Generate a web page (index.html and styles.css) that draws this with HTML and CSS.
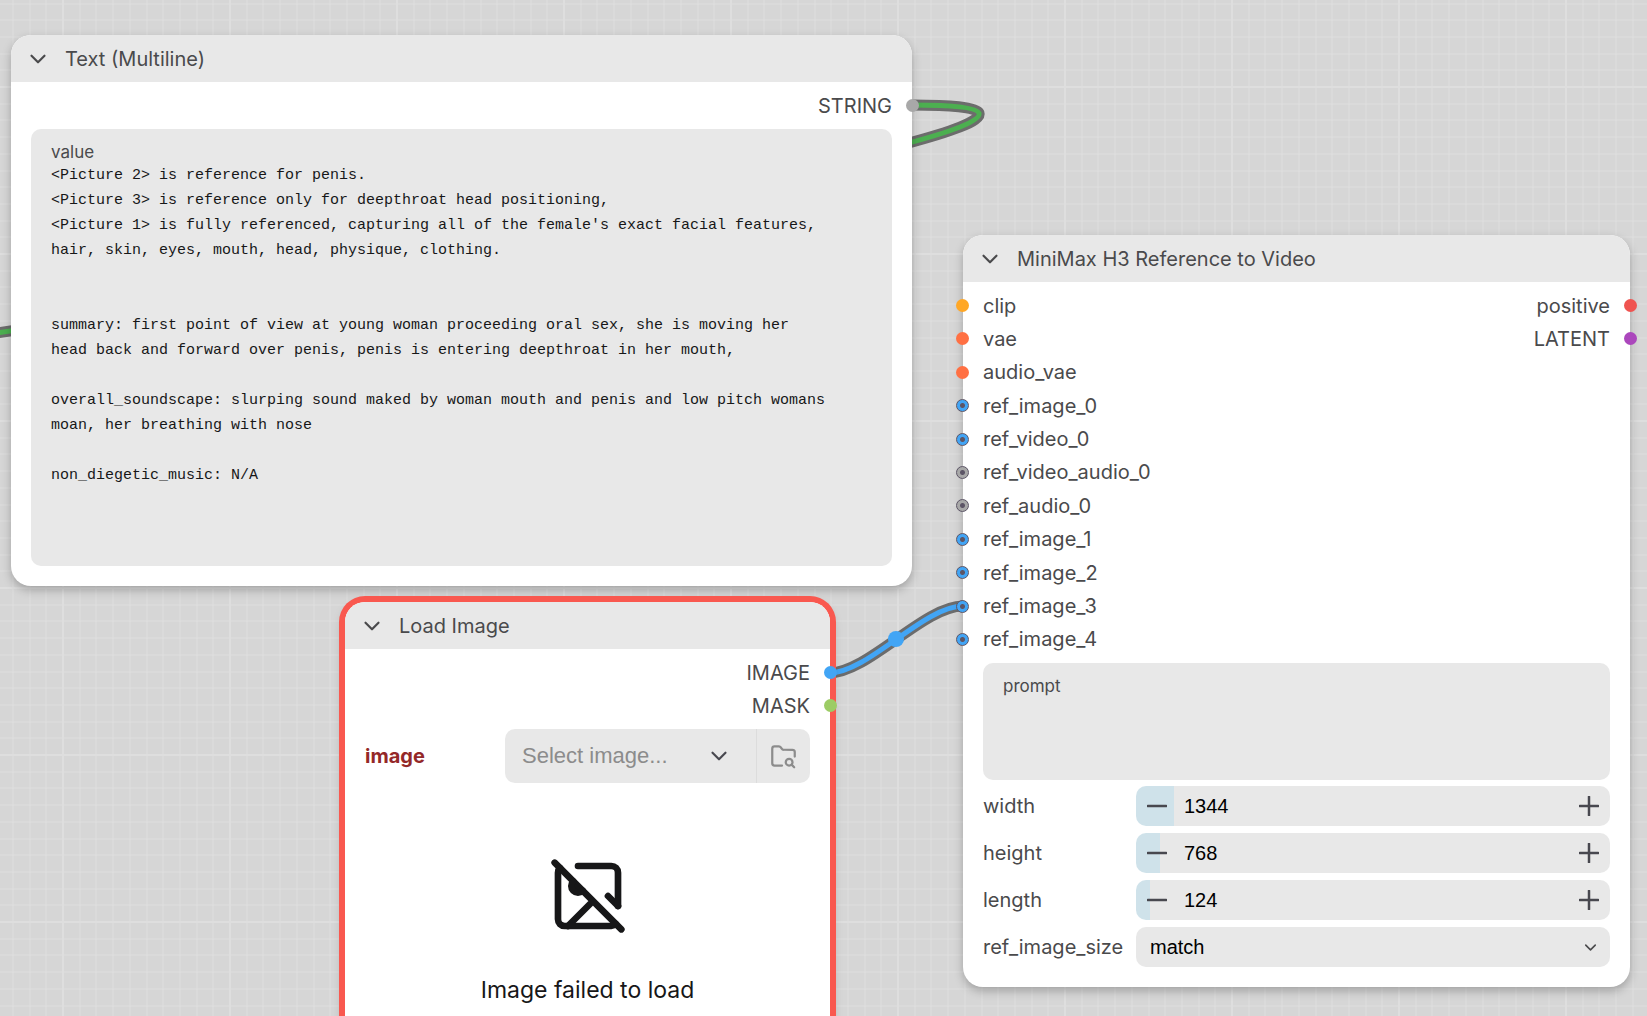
FILE: index.html
```
<!DOCTYPE html>
<html lang="en">
<head>
  <meta charset="utf-8">
  <title>Workflow</title>
  <link rel="stylesheet" href="styles.css">
</head>
<body>
  <!-- shared icons -->
  <svg class="sprite" aria-hidden="true">
    <symbol id="chevron" viewBox="0 0 24 24"><path d="m6 9 6 6 6-6"/></symbol>
    <symbol id="minus" viewBox="0 0 24 24"><path d="M1 12h22"/></symbol>
    <symbol id="plus" viewBox="0 0 24 24"><path d="M1 12h22M12 1v22"/></symbol>
  </svg>

  <main class="canvas">
    <svg class="links" aria-hidden="true">
      <defs>
        <pattern id="grid" x="62" y="86" width="167" height="167" patternUnits="userSpaceOnUse">
          <path class="grid-minor" d="M18 0v167M34 0v167M51 0v167M68 0v167M85 0v167M101 0v167M118 0v167M135 0v167M151 0v167M0 18h167M0 34h167M0 51h167M0 68h167M0 85h167M0 101h167M0 118h167M0 135h167M0 151h167"/>
          <path class="grid-major" d="M1 0v167M0 1h167"/>
        </pattern>
      </defs>
      <rect width="100%" height="100%" fill="url(#grid)"/>
      <g class="link link-string">
        <path class="link-edge" d="M913 105C950 105 976 107 979 113C982 121 950 132 905 144"/>
        <path d="M913 105C950 105 976 107 979 113C982 121 950 132 905 144"/>
        <path class="link-edge" d="M-10 334L30 328"/>
        <path d="M-10 334L30 328"/>
      </g>
      <g class="link link-image">
        <path class="link-edge" d="M829 673C868 673 924 606 963 606"/>
        <path d="M829 673C868 673 924 606 963 606"/>
        <circle cx="896" cy="639" r="8"/>
      </g>
    </svg>

    <section class="node node-text">
      <header class="node-header">
        <button class="collapse" aria-label="Collapse"><svg><use href="#chevron"/></svg></button>
        <h2>Text (Multiline)</h2>
      </header>
      <div class="slots">
        <ul class="outputs">
          <li class="any">STRING</li>
        </ul>
      </div>
      <div class="textbox">
        <label for="value">value</label>
        <textarea id="value" rows="15" spellcheck="false">&lt;Picture 2&gt; is reference for penis.
&lt;Picture 3&gt; is reference only for deepthroat head positioning,
&lt;Picture 1&gt; is fully referenced, capturing all of the female's exact facial features,
hair, skin, eyes, mouth, head, physique, clothing.


summary: first point of view at young woman proceeding oral sex, she is moving her
head back and forward over penis, penis is entering deepthroat in her mouth,

overall_soundscape: slurping sound maked by woman mouth and penis and low pitch womans
moan, her breathing with nose

non_diegetic_music: N/A</textarea>
      </div>
    </section>

    <section class="node node-load error">
      <header class="node-header">
        <button class="collapse" aria-label="Collapse"><svg><use href="#chevron"/></svg></button>
        <h2>Load Image</h2>
      </header>
      <div class="slots">
        <ul class="outputs">
          <li class="image">IMAGE</li>
          <li class="mask">MASK</li>
        </ul>
      </div>
      <div class="file-row">
        <label for="file">image</label>
        <div class="file-picker">
          <button id="file" class="file-select">Select image... <svg><use href="#chevron"/></svg></button>
          <button class="file-browse" aria-label="Browse">
            <svg viewBox="0 0 24 24"><path d="M10.7 20H4a2 2 0 0 1-2-2V5a2 2 0 0 1 2-2h3.9a2 2 0 0 1 1.7.9l.8 1.2a2 2 0 0 0 1.7.9H20a2 2 0 0 1 2 2v4"/><circle cx="17" cy="17" r="3"/><path d="m21.500 21.500-2.300-2.300"/></svg>
          </button>
        </div>
      </div>
      <div class="preview">
        <svg viewBox="0 0 24 24" aria-hidden="true">
          <path d="M2 2l20 20M13.500 13.500 6 21M18 12l3 3"/>
          <path class="solid" d="M10.410 10.410a2 2 0 1 1-2.830-2.830"/>
          <path d="M3.590 3.590A2 2 0 0 0 3 5v14a2 2 0 0 0 2 2h14c.55 0 1.050-.22 1.410-.59M21 15V5a2 2 0 0 0-2-2H9"/>
        </svg>
        <p>Image failed to load</p>
      </div>
    </section>

    <section class="node node-video">
      <header class="node-header">
        <button class="collapse" aria-label="Collapse"><svg><use href="#chevron"/></svg></button>
        <h2>MiniMax H3 Reference to Video</h2>
      </header>
      <div class="slots">
        <ul class="inputs">
          <li class="clip">clip</li>
          <li class="vae">vae</li>
          <li class="vae">audio_vae</li>
          <li class="image optional">ref_image_0</li>
          <li class="image optional">ref_video_0</li>
          <li class="any optional">ref_video_audio_0</li>
          <li class="any optional">ref_audio_0</li>
          <li class="image optional">ref_image_1</li>
          <li class="image optional">ref_image_2</li>
          <li class="image optional">ref_image_3</li>
          <li class="image optional">ref_image_4</li>
        </ul>
        <ul class="outputs">
          <li class="positive">positive</li>
          <li class="latent">LATENT</li>
        </ul>
      </div>
      <div class="textbox">
        <label for="prompt">prompt</label>
        <textarea id="prompt" rows="3"></textarea>
      </div>
      <div class="widgets">
        <label for="width">width</label>
        <div class="number" style="--fill: 8%">
          <button aria-label="Decrease width"><svg><use href="#minus"/></svg></button>
          <input id="width" type="text" value="1344">
          <button aria-label="Increase width"><svg><use href="#plus"/></svg></button>
        </div>
        <label for="height">height</label>
        <div class="number" style="--fill: 5%">
          <button aria-label="Decrease height"><svg><use href="#minus"/></svg></button>
          <input id="height" type="text" value="768">
          <button aria-label="Increase height"><svg><use href="#plus"/></svg></button>
        </div>
        <label for="length">length</label>
        <div class="number" style="--fill: 3%">
          <button aria-label="Decrease length"><svg><use href="#minus"/></svg></button>
          <input id="length" type="text" value="124">
          <button aria-label="Increase length"><svg><use href="#plus"/></svg></button>
        </div>
        <label for="size">ref_image_size</label>
        <div class="combo">
          <select id="size"><option>match</option></select>
          <svg><use href="#chevron"/></svg>
        </div>
      </div>
    </section>
  </main>
</body>
</html>
```
FILE: styles.css
```
:root {
  --canvas: #d6d6d6;
  --widget: #e8e8e8;
  --text: #4a4a4c;
  --icon: #48484f;
  --error: #f9584f;
}

*,
*::before,
*::after {
  box-sizing: border-box;
}

body {
  margin: 0;
  font-family: Inter, sans-serif;
  font-size: 20px;
  color: var(--text);
}

button,
input,
select,
textarea {
  margin: 0;
  padding: 0;
  border: 0;
  background: none;
  color: inherit;
}

button {
  display: flex;
  align-items: center;
  cursor: pointer;
}

svg {
  fill: none;
  stroke: currentColor;
  stroke-width: 2;
  stroke-linecap: round;
  stroke-linejoin: round;
}

.sprite {
  display: none;
}

/* canvas */

.canvas {
  position: relative;
  height: 100vh;
  overflow: hidden;
  background: var(--canvas);
}

.links {
  position: absolute;
  width: 100%;
  height: 100%;
  stroke: none;
}

.grid-minor {
  stroke: #dedede;
  stroke-width: 1;
}

.grid-major {
  stroke: #dedede;
  stroke-width: 2;
}

.link path {
  stroke-width: 5;
}

.link .link-edge {
  stroke: #6c6c6c;
  stroke-width: 11;
}

.link-string {
  stroke: #4caf50;
}

.link-image {
  stroke: #42a5f5;
}

.link-image circle {
  fill: #42a5f5;
  stroke: none;
}

/* nodes */

.node {
  position: absolute;
  border-radius: 20px;
  background: #fff;
  box-shadow: 0 4px 10px rgba(0, 0, 0, 0.25);
}

.node-text {
  left: 11px;
  top: 35px;
  width: 901px;
  padding-bottom: 20px;
}

.node-load {
  left: 345px;
  top: 602px;
  width: 485px;
  height: 600px;
}

.node-video {
  left: 963px;
  top: 235px;
  width: 667px;
  padding-bottom: 20px;
}

.node.error {
  box-shadow: 0 0 0 6px var(--error), 0 4px 12px rgba(0, 0, 0, 0.4);
}

.node-header {
  display: flex;
  align-items: center;
  gap: 14px;
  height: 47px;
  padding: 0 14px;
  border-radius: 20px 20px 0 0;
  background: var(--widget);
}

.node-header h2 {
  margin: 0;
  font-size: 20px;
  font-weight: 400;
}

.collapse svg {
  width: 26px;
  height: 26px;
}

/* slots */

.slots {
  display: flex;
  justify-content: space-between;
  padding: 7px 0;
}

.slots ul {
  display: grid;
  align-content: start;
  margin: 0;
  padding: 0;
  list-style: none;
}

.slots .outputs {
  margin-left: auto;
}

.slots .inputs {
  min-height: 367px;
  align-content: space-between;
}

.slots li {
  display: flex;
  align-items: center;
  gap: 14px;
  height: 33px;
}

.inputs li::before,
.outputs li::after {
  content: "";
  width: 13px;
  height: 13px;
  border-radius: 50%;
  background: var(--slot);
}

.inputs li::before {
  margin-left: -7px;
}

.outputs li {
  justify-content: flex-end;
}

.outputs li::after {
  margin-right: -7px;
}

.slots .optional::before {
  border: 1px solid #5c5566;
  background: radial-gradient(circle, #5c5566 2px, var(--slot) 3px);
}

.any { --slot: #a8a8a8; }
.image { --slot: #42a5f5; }
.mask { --slot: #9ccc65; }
.clip { --slot: #ffa726; }
.vae { --slot: #ff7043; }
.positive { --slot: #ef5350; }
.latent { --slot: #ab47bc; }

/* text widgets */

.textbox {
  margin: 0 20px;
  padding: 13px 20px 0;
  border-radius: 10px;
  background: var(--widget);
}

.textbox label {
  display: block;
  margin-bottom: 1px;
  font-size: 17px;
  line-height: 20px;
}

.textbox textarea {
  display: block;
  width: 100%;
  resize: none;
  outline: none;
  overflow: hidden;
  color: #171718;
  font-family: Consolas, "Liberation Mono", monospace;
  font-size: 15px;
  line-height: 25px;
}

.node-text .textbox {
  padding-bottom: 28px;
}

.node-video .textbox {
  padding-bottom: 8px;
}

/* number and combo widgets */

.widgets {
  display: grid;
  grid-template-columns: 143px 1fr;
  column-gap: 10px;
  row-gap: 7px;
  align-items: center;
  margin: 6px 20px 0;
}

.number,
.combo {
  height: 40px;
  border-radius: 10px;
  font-family: "Liberation Sans", Arial, sans-serif;
}

.number {
  display: flex;
  align-items: center;
  gap: 17px;
  padding: 0 11px;
  background: linear-gradient(to right, #cfe2ea var(--fill), var(--widget) 0);
}

.number input {
  flex: 1;
  min-width: 0;
  color: #000;
  font: inherit;
}

.number svg {
  width: 20px;
  height: 20px;
  color: var(--icon);
  stroke-width: 3;
}

.combo {
  display: flex;
  align-items: center;
  padding-right: 10px;
  background: var(--widget);
}

.combo select {
  flex: 1;
  height: 100%;
  padding-left: 14px;
  appearance: none;
  color: #000;
  font: inherit;
}

.combo svg {
  width: 19px;
  height: 19px;
}

/* load image */

.file-row {
  display: flex;
  align-items: center;
  justify-content: space-between;
  padding: 0 20px;
}

.file-row label {
  color: #942828;
  font-weight: 700;
}

.file-picker {
  display: flex;
  width: 305px;
  height: 54px;
  border-radius: 10px;
  background: var(--widget);
}

.file-select {
  flex: 1;
  justify-content: space-between;
  padding: 0 24px 0 17px;
  color: #8c8c8c;
  font-family: "Liberation Sans", Arial, sans-serif;
  font-size: 22px;
}

.file-select svg {
  width: 26px;
  height: 26px;
  color: var(--icon);
}

.file-browse {
  justify-content: center;
  width: 54px;
  border-left: 1px solid #dcdcdc;
  color: #8c8c8c;
}

.file-browse svg {
  width: 27px;
  height: 27px;
}

.preview {
  display: flex;
  flex-direction: column;
  align-items: center;
  gap: 40px;
  padding-top: 73px;
  color: #171718;
}

.preview svg {
  width: 80px;
  height: 80px;
}

.preview .solid {
  fill: currentColor;
}

.preview p {
  margin: 0;
  font-size: 23px;
  line-height: 28px;
}
```
